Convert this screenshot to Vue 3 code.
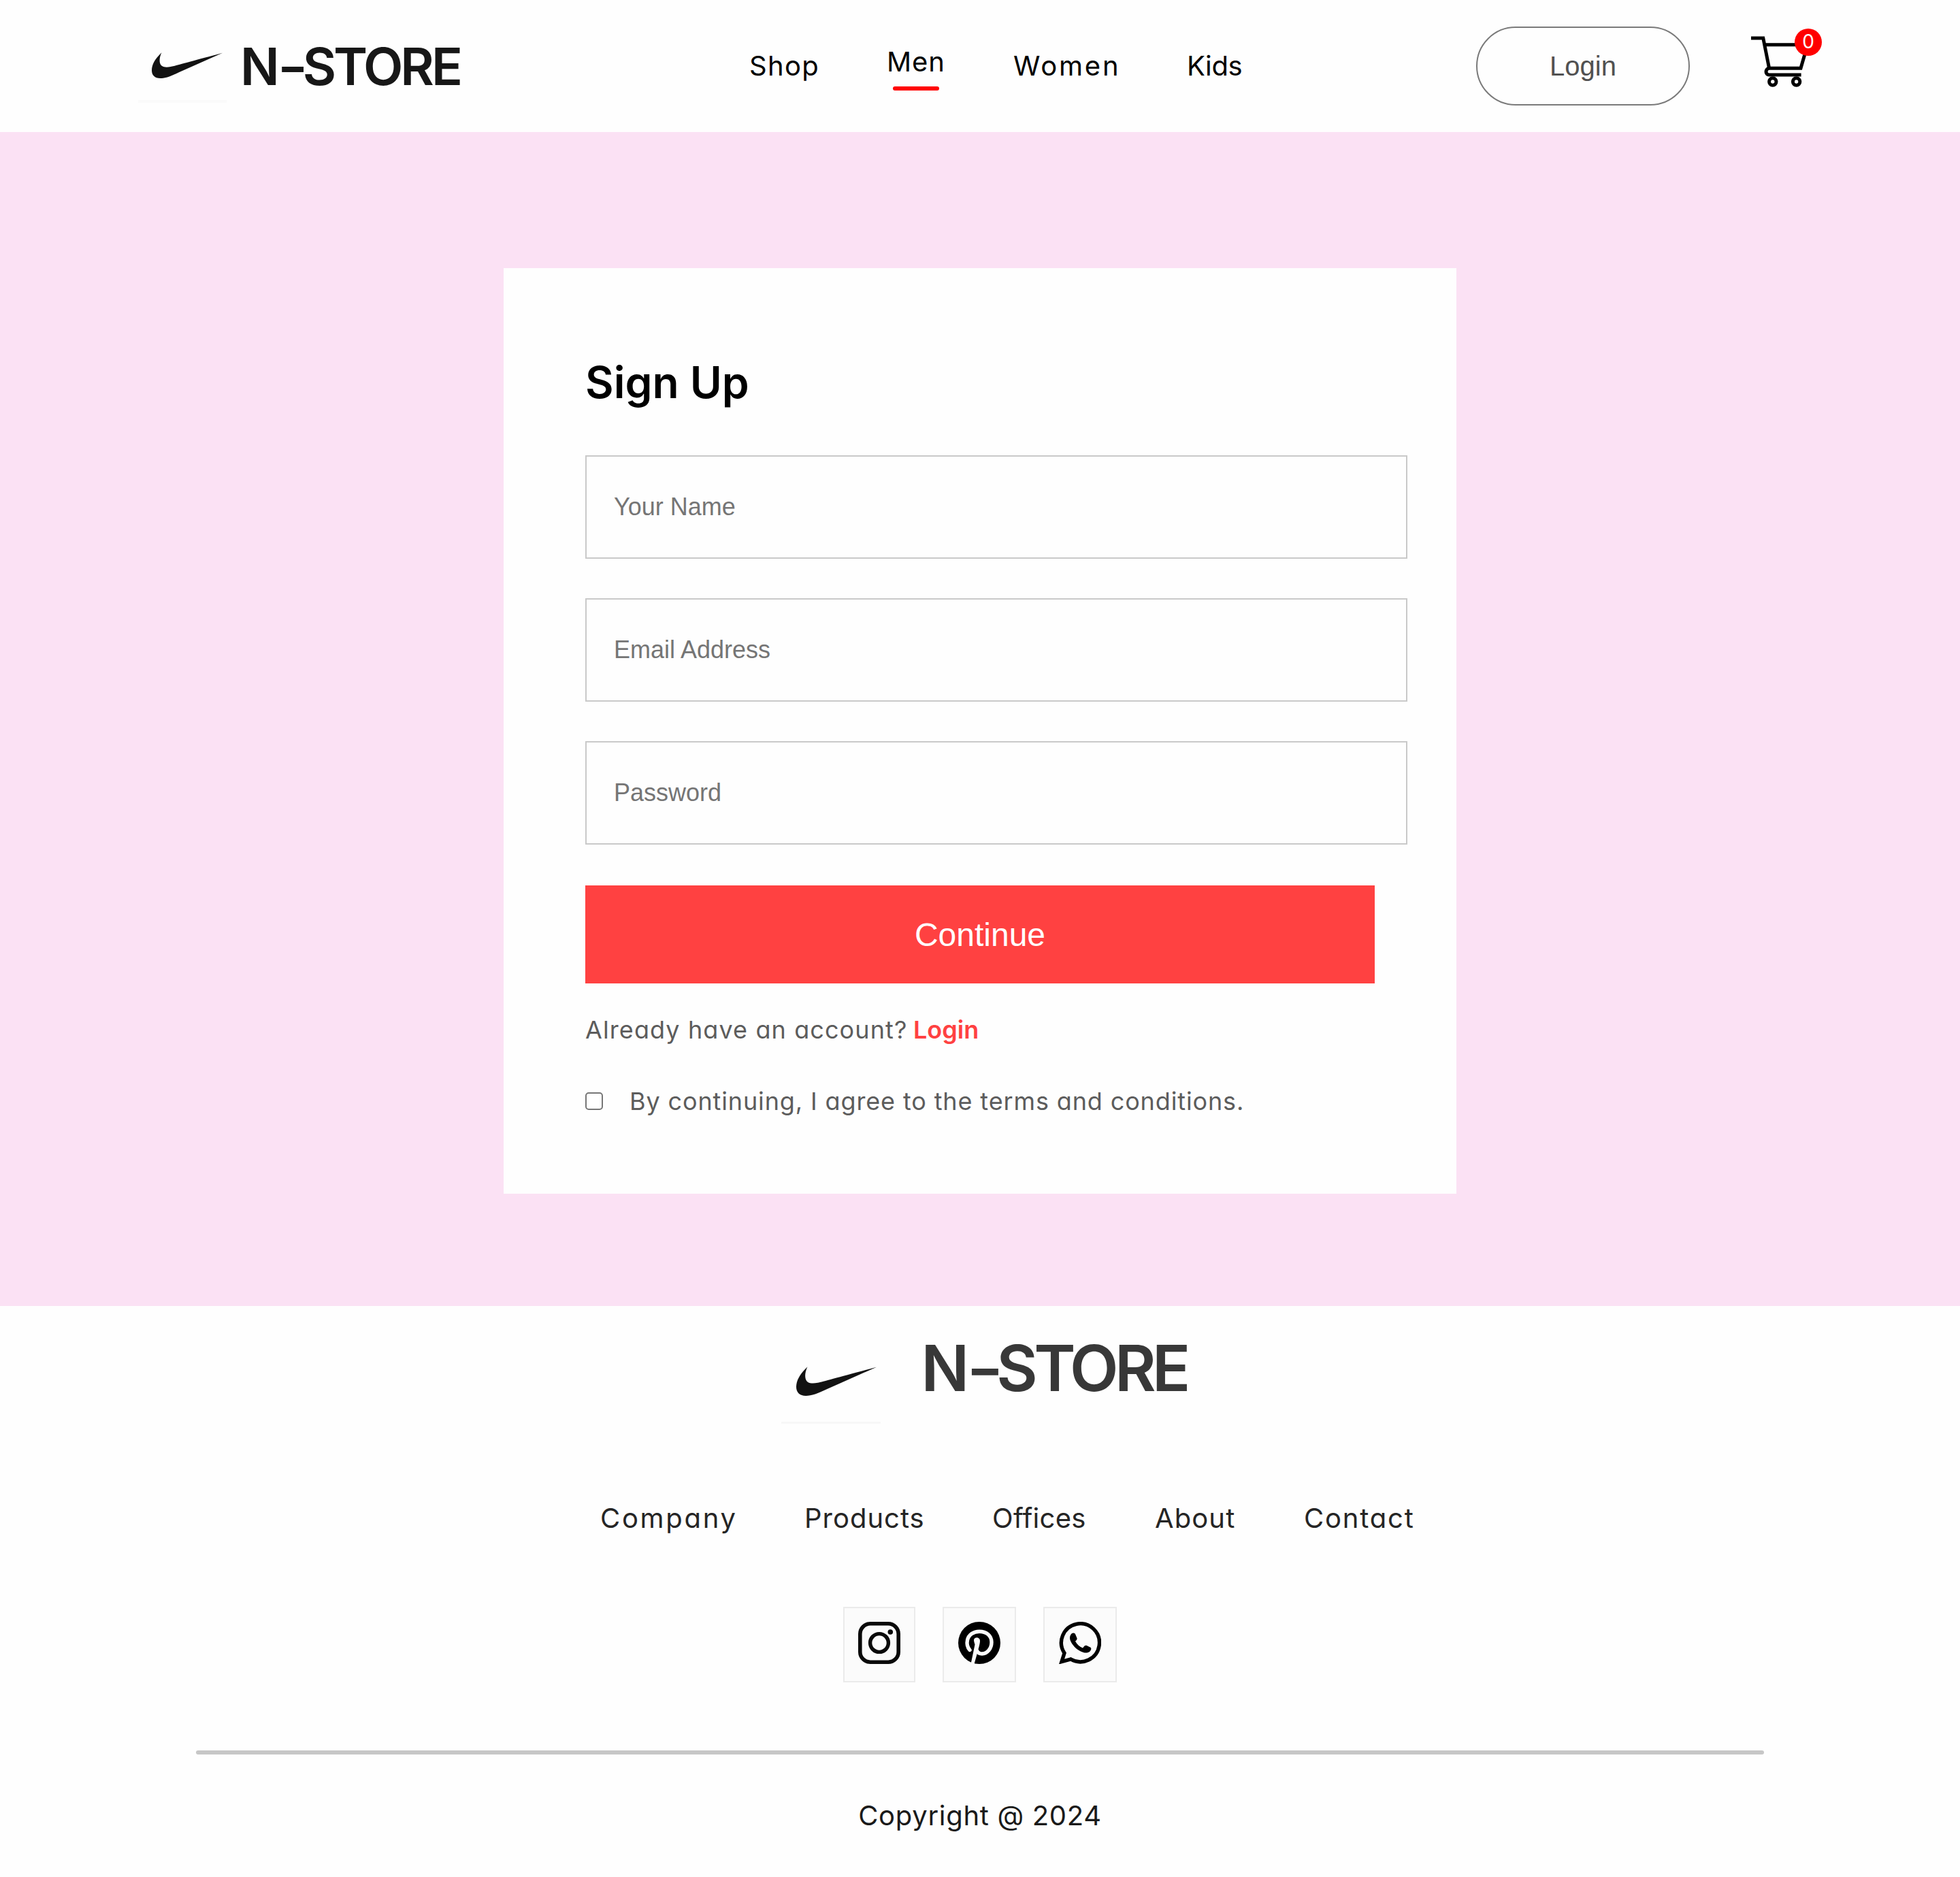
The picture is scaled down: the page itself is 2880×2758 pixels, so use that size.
<script setup>
import { ref } from 'vue'

const cartCount = ref(0)
const active = ref('men')

const navItems = [
  { id: 'shop', label: 'Shop' },
  { id: 'men', label: 'Men' },
  { id: 'women', label: 'Women' },
  { id: 'kids', label: 'Kids' },
]
const footerLinks = [
  { id: 'company', label: 'Company' },
  { id: 'products', label: 'Products' },
  { id: 'offices', label: 'Offices' },
  { id: 'about', label: 'About' },
  { id: 'contact', label: 'Contact' },
]
const fields = [
  { type: 'text', placeholder: 'Your Name' },
  { type: 'email', placeholder: 'Email Address' },
  { type: 'password', placeholder: 'Password' },
]
const swoosh =
  'M426 174L240 258C205 275 182 284 160 284C137 284 124 270 124 250C124 225 138 200 166 173C158 190 156 206 159 218C163 234 178 239 205 234C225 230 300 208 426 174Z'
</script>

<template>
  <div class="page">
    <header class="navbar">
      <div class="logo">
        <div class="logo-mark">
          <svg class="swoosh" viewBox="124 172 302 112" preserveAspectRatio="none"><path :d="swoosh" /></svg>
        </div>
        <p class="logo-text">N<span class="dash">-</span>STORE</p>
      </div>
      <ul class="menu">
        <li v-for="item in navItems" :key="item.id" :class="item.id">
          <a>{{ item.label }}</a>
          <hr v-if="item.id === active" />
        </li>
      </ul>
      <div class="actions">
        <button class="login">Login</button>
        <div class="cart">
          <svg class="cart-icon" viewBox="0 0 84 76" fill="none" stroke="#000" stroke-width="5">
            <path d="M0 4H17.8L26.6 48.3H73L83 13.7H20" />
            <path d="M26.6 48.3C20.5 49 20.5 58 26.6 58H73.6" />
            <circle cx="31.8" cy="68" r="5.2" />
            <circle cx="66.6" cy="68" r="5.2" />
          </svg>
          <span class="badge">{{ cartCount }}</span>
        </div>
      </div>
    </header>

    <main class="signup">
      <form class="card" @submit.prevent>
        <h1>Sign Up</h1>
        <div class="fields">
          <input v-for="f in fields" :key="f.type" :type="f.type" :placeholder="f.placeholder" />
        </div>
        <button class="continue">Continue</button>
        <p class="have-account"><span class="question">Already have an account?</span><span class="login-link">Login</span></p>
        <label class="agree">
          <input type="checkbox" />
          <span>By continuing, I agree to the terms and conditions.</span>
        </label>
      </form>
    </main>

    <footer class="footer">
      <div class="footer-logo">
        <div class="footer-mark">
          <svg class="swoosh" viewBox="124 172 302 112" preserveAspectRatio="none"><path :d="swoosh" /></svg>
        </div>
        <p>N<span class="dash">-</span>STORE</p>
      </div>
      <ul class="footer-links">
        <li v-for="l in footerLinks" :key="l.id" :class="l.id">{{ l.label }}</li>
      </ul>
      <div class="socials">
        <div class="social narrow">
          <svg viewBox="0 0 62 62" fill="none" stroke="#0a0a0a">
            <rect x="2.8" y="2.8" width="56.4" height="56.4" rx="15" stroke-width="5.6" />
            <circle cx="31" cy="31" r="13.4" stroke-width="5.4" />
            <circle cx="47.3" cy="15" r="3.8" fill="#0a0a0a" stroke="none" />
          </svg>
        </div>
        <div class="social">
          <svg viewBox="0 0 62 62" fill="none" stroke="#fbfbfb" stroke-linecap="round">
            <circle cx="31" cy="31" r="31" fill="#000" stroke="none" />
            <path d="M17 41.5C13.5 37.5 12.3 32 13.6 26.5C15.4 19 22.5 14.2 31 14.2C41.5 14.2 49 20.5 49 30C49 39.5 42.5 47 35 47C31.5 47 28.8 45.5 27.6 42.5" stroke-width="5.4" />
            <path d="M23 27C23 22 32 22 32 28C32 33 29.5 40 28 46L23.5 62H18.5L24.5 33.5C24 31.5 23 29 23 27Z" fill="#fbfbfb" stroke="none" />
          </svg>
        </div>
        <div class="social">
          <svg viewBox="0 0 62 62">
            <path d="M8 46A28 28 0 1 1 17.5 55L4 58.6Z" fill="none" stroke="#000" stroke-width="5.4" />
            <path d="M18.5 17.5C20 16 23 16 24 18L26.5 24C27 25.5 26 27 24 28.5C26.5 33 30 36.5 35 38.5L37.5 35.5C38.5 34.6 39.5 34.6 41 35L46.5 37.8C48 38.6 47.3 42 45.5 43.5C42 46.5 37 46 32 43.5C25 40 19.5 34 17 28C15.3 24 16 20 18.5 17.5Z" />
          </svg>
        </div>
      </div>
      <hr />
      <p class="copyright">Copyright @ 2024</p>
    </footer>
  </div>
</template>

<style>
body {
  margin: 0;
  background: #fff;
}
</style>

<style scoped>
.page {
  width: 2880px;
  height: 2758px;
  overflow: hidden;
  background: #fefefe;
  font-family: Inter, 'Open Sans', sans-serif;
  font-feature-settings: 'cv11';
  white-space: nowrap;
}
ul,
p,
h1,
hr {
  margin: 0;
  padding: 0;
  list-style: none;
  border: 0;
}
svg {
  display: block;
}

/* Top bar */
.navbar {
  display: flex;
  align-items: center;
  box-sizing: border-box;
  height: 194px;
  padding: 0 203px;
}
.logo {
  display: flex;
  align-items: center;
  width: 898px;
}
.logo-mark {
  box-sizing: border-box;
  width: 130px;
  height: 108px;
  padding: 34px 6px 0 20px;
  border-bottom: 4px solid #fafafa;
}
.logo-mark .swoosh {
  width: 104px;
  height: 38px;
}
.swoosh {
  fill: #121212;
}
.logo-text {
  margin-left: 20px;
  color: #171717;
  font-size: 76px;
  font-weight: 600;
  line-height: 108px;
  letter-spacing: -4px;
}
.dash {
  display: inline-block;
  margin: 0 0.02em 0 0.067em;
  transform: scaleX(1.28);
}
.menu {
  display: flex;
  align-items: center;
  gap: 100px;
  color: #000;
  font-size: 40px;
  line-height: 60px;
}
.menu li {
  display: flex;
  flex-direction: column;
  gap: 6px;
}
.menu hr {
  width: 68px;
  height: 6px;
  margin-left: 9px;
  border-radius: 3px;
  background: #f00;
}
.shop { width: 102px; letter-spacing: 1.3px; }
.men { width: 86px; letter-spacing: 0.9px; }
.women { width: 155px; letter-spacing: 2.8px; }
.kids { width: 82px; letter-spacing: -0.4px; }
.actions {
  display: flex;
  align-items: center;
  gap: 90px;
  margin-left: auto;
}
.login {
  width: 314px;
  height: 116px;
  padding: 0;
  border: 2px solid #7a7a7a;
  border-radius: 58px;
  background: transparent;
  color: #515151;
  font: 40px 'Liberation Sans', Arial, sans-serif;
}
.cart {
  position: relative;
  width: 104px;
  height: 90px;
}
.cart-icon {
  width: 84px;
  height: 76px;
}
.badge {
  position: absolute;
  top: -10px;
  right: 0;
  width: 40px;
  height: 40px;
  border-radius: 50%;
  background: #f00;
  color: #fff;
  font-size: 28px;
  line-height: 39px;
  text-align: center;
}

/* Sign-up form */
.signup {
  box-sizing: border-box;
  height: 1725px;
  padding-top: 200px;
  background: #fbe1f4;
}
.card {
  box-sizing: border-box;
  width: 1400px;
  height: 1360px;
  margin: 0 auto;
  padding: 120px;
  background: #fefefe;
}
h1 {
  color: #000;
  font-size: 64px;
  font-weight: 600;
  line-height: 96px;
}
.fields {
  display: flex;
  flex-direction: column;
  gap: 58px;
  margin-top: 59px;
}
.fields input {
  box-sizing: border-box;
  width: 1208px;
  height: 152px;
  padding: 0 40px;
  border: 2px solid #c9c9c9;
  border-radius: 0;
  outline: none;
  background: transparent;
  font: 36px 'Liberation Sans', Arial, sans-serif;
}
.fields input::placeholder {
  color: #757575;
}
.continue {
  display: block;
  width: 1160px;
  height: 144px;
  margin-top: 60px;
  padding: 0;
  border: 0;
  background: #ff4141;
  color: #fff;
  font: 48px 'Liberation Sans', Arial, sans-serif;
}
.have-account {
  display: flex;
  margin-top: 42px;
  color: #5c5c5c;
  font-size: 36px;
  line-height: 52px;
}
.question {
  width: 482px;
  letter-spacing: 1.1px;
}
.login-link {
  color: #ff4141;
  font-weight: 600;
}
.agree {
  display: flex;
  align-items: center;
  gap: 39px;
  margin-top: 53px;
  color: #5c5c5c;
  font-size: 36px;
  line-height: 52px;
  letter-spacing: 0.87px;
}
.agree input {
  appearance: none;
  box-sizing: border-box;
  width: 26px;
  height: 26px;
  margin: 0;
  border: 2px solid #767676;
  border-radius: 5px;
  background: #fff;
}

/* Footer */
.footer {
  display: flex;
  flex-direction: column;
}
.footer-logo {
  display: flex;
  align-items: flex-start;
  height: 182px;
  margin-left: 1148px;
}
.footer-mark {
  box-sizing: border-box;
  width: 146px;
  height: 173px;
  padding: 89px 0 0 22px;
  border-bottom: 3px solid #f7f7f7;
}
.footer-mark .swoosh {
  width: 118px;
  height: 43px;
}
.footer-logo p {
  margin-left: 59.5px;
  color: #383838;
  font-size: 93px;
  font-weight: 600;
  line-height: 182px;
  letter-spacing: -5.6px;
}
.footer-links {
  display: flex;
  gap: 100px;
  margin: 100px 0 0 882px;
  color: #252525;
  font-size: 40px;
  line-height: 60px;
}
.company { width: 200px; letter-spacing: 2.7px; }
.products { width: 176px; letter-spacing: 1px; }
.offices { width: 139px; letter-spacing: 0.3px; }
.about { width: 119px; letter-spacing: 1.1px; }
.contact { width: 164px; letter-spacing: 1.8px; }
.socials {
  display: flex;
  justify-content: center;
  gap: 40px;
  margin-top: 100px;
}
.social {
  box-sizing: border-box;
  width: 108px;
  height: 111px;
  padding: 20px 0 0 21px;
  border: 2px solid #ebebeb;
  background: #fbfbfb;
}
.social.narrow {
  width: 106px;
  padding-left: 20px;
}
.social svg {
  width: 62px;
  height: 62px;
}
.footer hr {
  width: 2304px;
  height: 6px;
  margin: 100px auto 0;
  border-radius: 3px;
  background: #c7c7c7;
}
.copyright {
  margin-top: 60px;
  color: #1a1a1a;
  font-size: 40px;
  line-height: 60px;
  letter-spacing: 0.7px;
  text-align: center;
}
</style>
